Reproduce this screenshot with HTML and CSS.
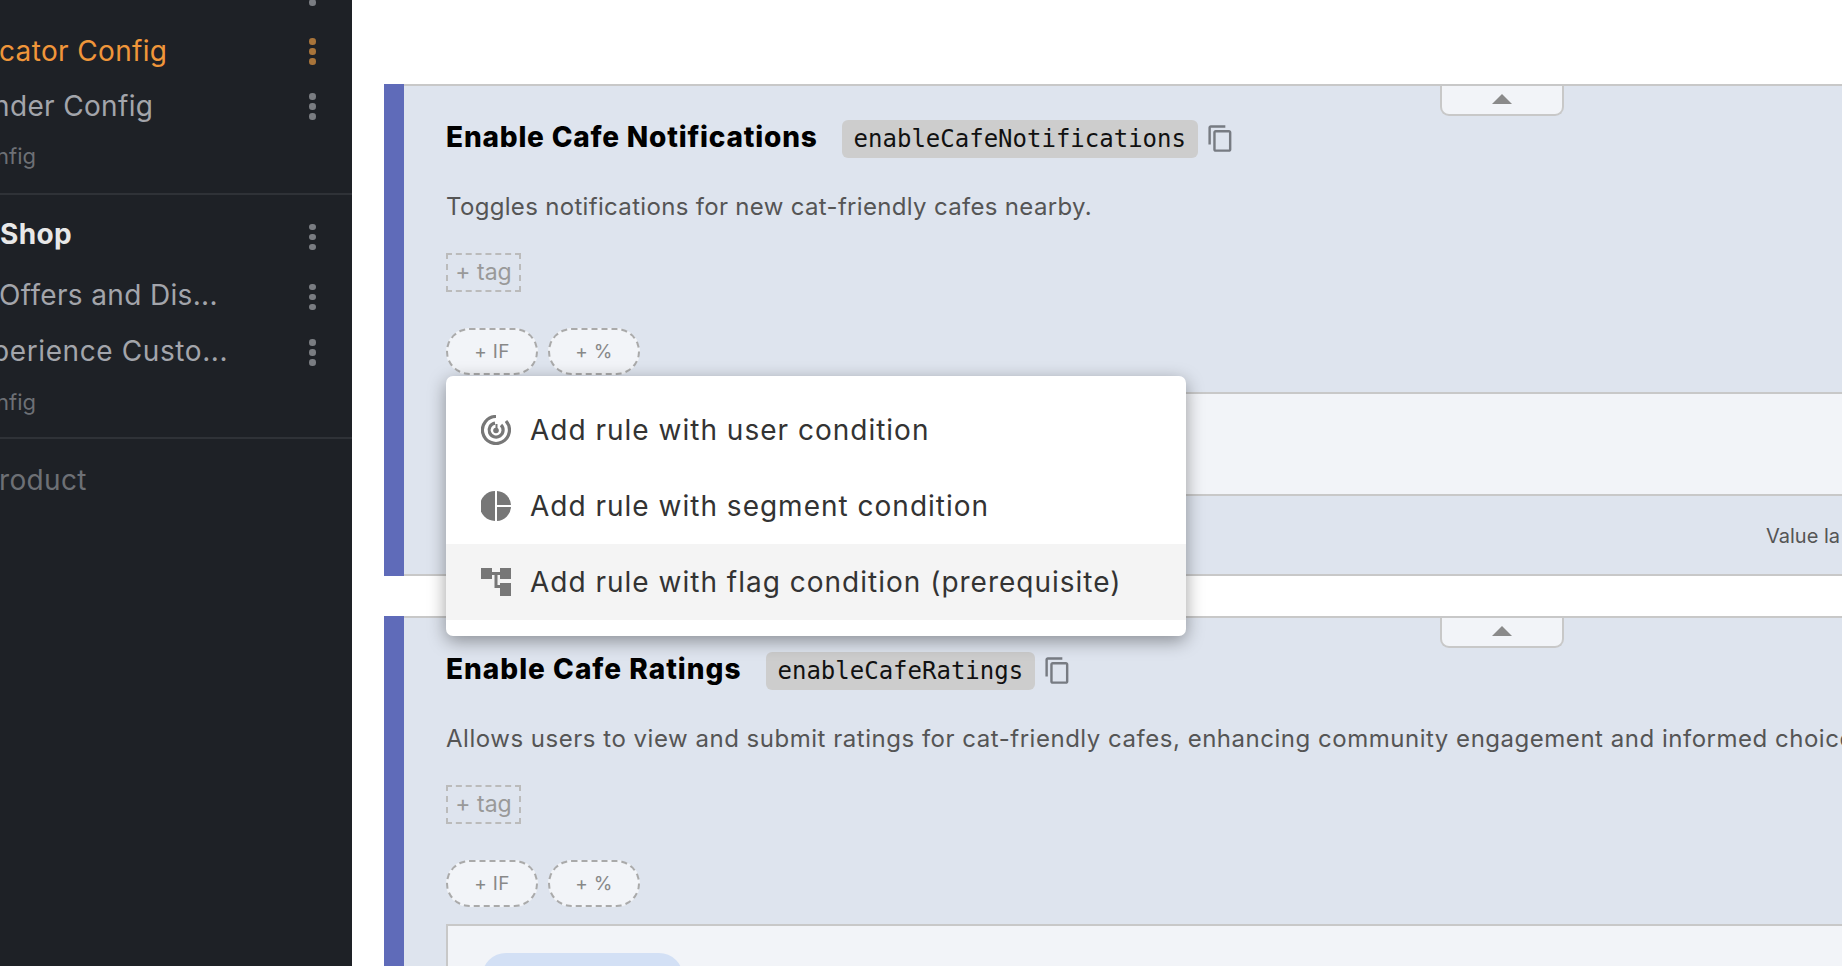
FILE: index.html
```html
<!DOCTYPE html>
<html lang="en">
<head>
<meta charset="utf-8">
<title>Feature flags</title>
<link rel="stylesheet" href="styles.css">
</head>
<body>
<aside class="sidebar">
  <div class="nav-group nav-group-top">
    <div class="nav-row nav-row-partial"><span class="nav-label"></span><span class="dots"><i></i><i></i><i></i></span></div>
    <div class="nav-row nav-active"><span class="nav-label clip-1">cator Config</span><span class="dots"><i></i><i></i><i></i></span></div>
    <div class="nav-row"><span class="nav-label clip-2">nder Config</span><span class="dots"><i></i><i></i><i></i></span></div>
    <div class="nav-sub">nfig</div>
  </div>
  <div class="nav-group nav-group-mid">
    <div class="nav-row nav-head"><span class="nav-label">Shop</span><span class="dots"><i></i><i></i><i></i></span></div>
    <div class="nav-row nav-tall"><span class="nav-label clip-3">Offers and Dis...</span><span class="dots"><i></i><i></i><i></i></span></div>
    <div class="nav-row"><span class="nav-label clip-4">perience Custo...</span><span class="dots"><i></i><i></i><i></i></span></div>
    <div class="nav-sub">nfig</div>
  </div>
  <div class="nav-group">
    <div class="nav-product">roduct</div>
  </div>
</aside>
<main class="main">
  <section class="flag">
    <div class="flag-bar"></div>
    <div class="flag-body">
      <button class="collapse-tab" type="button"><span class="tri"></span></button>
      <div class="flag-title-row">
        <h2 class="flag-title">Enable Cafe Notifications</h2>
        <code class="flag-key">enableCafeNotifications</code>
        <svg class="copy-icon" viewBox="0 0 24 24"><path d="M16 1H4c-1.100 0-2 .9-2 2v14h2V3h12V1zm3 4H8c-1.100 0-2 .9-2 2v14c0 1.100.9 2 2 2h11c1.100 0 2-.9 2-2V7c0-1.100-.9-2-2-2zm0 16H8V7h11v14z"/></svg>
      </div>
      <p class="flag-desc">Toggles notifications for new cat-friendly cafes nearby.</p>
      <div class="tag-add">+ tag</div>
      <div class="pills"><span class="pill">+ IF</span><span class="pill">+ %</span></div>
      <div class="rule-box"></div>
      <div class="flag-foot"><span class="foot-text">Value la</span></div>
      <div class="menu">
        <div class="menu-item">
          <svg class="menu-icon" viewBox="0 0 30 30"><path class="ring" d="M15 1.500A13.500 13.500 0 1 0 25 6"/><path class="ring" d="M14 8.100A7 7 0 1 0 20 10"/><path class="ring-thin" d="M15.500 9V15"/><circle class="core" cx="15" cy="15.500" r="2.800"/></svg>
          <span>Add rule with user condition</span>
        </div>
        <div class="menu-item">
          <svg class="menu-icon" viewBox="0 0 30 30"><path class="solid" d="M14 0A15 15 0 0 0 14 30Z"/><path class="solid" d="M16 0A15 15 0 0 1 30 14H16Z"/><path class="solid" d="M16 16H30A15 15 0 0 1 16 30Z"/></svg>
          <span>Add rule with segment condition</span>
        </div>
        <div class="menu-item menu-hover">
          <svg class="menu-icon" viewBox="0 0 30 30"><path class="solid" d="M0 1H11V5H19V1H30V12H19V8H16.500V18H19V16H30V29H19V21H13.500V8H11V12H0Z"/></svg>
          <span>Add rule with flag condition (prerequisite)</span>
        </div>
      </div>
    </div>
  </section>
  <section class="flag">
    <div class="flag-bar"></div>
    <div class="flag-body">
      <button class="collapse-tab" type="button"><span class="tri"></span></button>
      <div class="flag-title-row">
        <h2 class="flag-title flag-title-short">Enable Cafe Ratings</h2>
        <code class="flag-key">enableCafeRatings</code>
        <svg class="copy-icon" viewBox="0 0 24 24"><path d="M16 1H4c-1.100 0-2 .9-2 2v14h2V3h12V1zm3 4H8c-1.100 0-2 .9-2 2v14c0 1.100.9 2 2 2h11c1.100 0 2-.9 2-2V7c0-1.100-.9-2-2-2zm0 16H8V7h11v14z"/></svg>
      </div>
      <p class="flag-desc flag-desc-long">Allows users to view and submit ratings for cat-friendly cafes, enhancing community engagement and informed choices.</p>
      <div class="tag-add">+ tag</div>
      <div class="pills"><span class="pill">+ IF</span><span class="pill">+ %</span></div>
      <div class="rule-box rule-box-open"><div class="rule-chip"></div></div>
    </div>
  </section>
</main>
</body>
</html>
```
FILE: styles.css
```css
* { box-sizing: border-box; }
html, body { height: 100%; }
body {
  margin: 0;
  display: flex;
  height: 966px;
  overflow: hidden;
  background: #fff;
  font-family: Inter, "Open Sans", "Liberation Sans", sans-serif;
}
.sidebar {
  width: 352px;
  flex: none;
  height: 966px;
  overflow: hidden;
  background: #1e2126;
  color: #a3a5ab;
}
.nav-group { border-bottom: 2px solid #2f3237; padding-bottom: 14px; }
.nav-group-mid { padding-bottom: 12px; }
.nav-group:last-child { border-bottom: 0; }
.nav-group-top { margin-top: -35px; }
.nav-row {
  display: flex;
  align-items: center;
  justify-content: space-between;
  height: 55px;
  padding-right: 36.500px;
  font-size: 28px;
  letter-spacing: .35px;
  white-space: nowrap;
}
.nav-label { padding-bottom: 2px; }
.nav-row-partial { margin-bottom: 4px; }
.dots { display: flex; flex-direction: column; gap: 3.500px; flex: none; }
.dots i { width: 6.500px; height: 6.500px; border-radius: 50%; background: #7a7d82; display: block; }
.nav-active { color: #f0963a; }
.nav-active .dots i { background: #a8743a; }
.clip-1 { margin-left: -1px; }
.clip-2 { margin-left: -7px; }
.clip-3 { margin-left: -1px; padding-bottom: 4px; }
.clip-4 { margin-left: -8px; padding-bottom: 4px; letter-spacing: .6px; }
.nav-sub { height: 45px; line-height: 45px; font-size: 22px; color: #6d7075; text-indent: -4px; }
.nav-head { font-weight: 700; color: #e8e8e8; height: 64px; margin-top: 10px; }
.nav-head .nav-label { padding-bottom: 7px; }
.nav-tall { height: 56px; }
.nav-product { height: 60px; line-height: 60px; padding-top: 11px; margin-left: -1px; font-size: 28px; letter-spacing: .35px; color: #6d7075; }

.main { flex: 1; min-width: 0; padding: 84px 0 0 32px; overflow: hidden; }
.flag { display: flex; width: 1600px; margin-bottom: 40px; }
.flag-bar { width: 20px; flex: none; background: #5f6bb9; }
.flag-body {
  position: relative;
  flex: 1;
  min-width: 0;
  background: #dee4ee;
  border-top: 2px solid #c8c8c8;
  border-bottom: 2px solid #c8c8c8;
  padding: 34px 0 0 42px;
  height: 492px;
}
.flag-title-row { display: flex; align-items: center; height: 38px; }
.flag-title { margin: 0 24px 4px 0; font-size: 28px; font-weight: 800; color: #000; letter-spacing: .8px; white-space: nowrap; }
.flag-title-short { letter-spacing: 1px; }
.flag-key {
  height: 38px;
  line-height: 38px;
  padding: 0 12px;
  border-radius: 6px;
  background: #cdcdcd;
  color: #111;
  font-family: "DejaVu Sans Mono", monospace;
  font-size: 24px;
}
.copy-icon { width: 29px; height: 29px; margin: 0 0 1px 8px; fill: #777b82; flex: none; }
.flag-desc { margin: 31px 0 0; height: 36px; line-height: 36px; font-size: 24px; letter-spacing: .32px; color: #555; white-space: nowrap; }
.flag-desc-long { letter-spacing: .52px; }
.tag-add {
  width: 75px;
  height: 39px;
  line-height: 34px;
  margin-top: 28px;
  text-align: center;
  font-size: 23px;
  color: #999;
  border: 2px dashed #bbb;
}
.pills { display: flex; gap: 10px; margin-top: 36px; }
.pill {
  width: 92px;
  height: 47px;
  line-height: 44px;
  text-align: center;
  font-size: 19px;
  letter-spacing: .3px;
  color: #888;
  background: #f2f4f8;
  border: 2px dashed #aaa;
  border-radius: 24px;
}
.rule-box { height: 104px; margin-top: 17px; background: #f2f4f8; border: 2px solid #c8c8c8; border-right: 0; padding: 27px 0 0 34px; }
.rule-box-open { height: 200px; }
.rule-chip { width: 201px; height: 60px; border-radius: 24px; background: #d3e0f5; }
.flag-foot { display: flex; height: 79px; align-items: center; padding-left: 1320px; }
.foot-text { font-size: 20px; color: #555; white-space: nowrap; }
.collapse-tab {
  position: absolute;
  top: 0;
  left: 1036px;
  width: 124px;
  height: 30px;
  padding: 8px 0 0;
  background: #f2f4f8;
  border: 2px solid #c8c8c8;
  border-top: 0;
  border-radius: 0 0 9px 9px;
  display: flex;
  justify-content: center;
}
.tri { width: 0; height: 0; border-left: 10px solid transparent; border-right: 10px solid transparent; border-bottom: 10px solid #8a8a8a; }
.menu {
  position: absolute;
  z-index: 5;
  top: 290px;
  left: 42px;
  width: 740px;
  height: 260px;
  padding: 16px 0;
  background: #fff;
  border-radius: 7px;
  box-shadow: 0 5px 18px rgba(0,0,0,.38);
}
.menu-item {
  display: flex;
  align-items: center;
  gap: 19px;
  height: 76px;
  padding-left: 35px;
  font-size: 28px;
  letter-spacing: 1px;
  color: #333;
  white-space: nowrap;
}
.menu-hover { background: #f4f4f4; }
.menu-icon { width: 30px; height: 30px; flex: none; }
.ring { fill: none; stroke: #777; stroke-width: 3.200; }
.ring-thin { fill: none; stroke: #777; stroke-width: 2; }
.core { fill: #777; }
.solid { fill: #777; }
```
